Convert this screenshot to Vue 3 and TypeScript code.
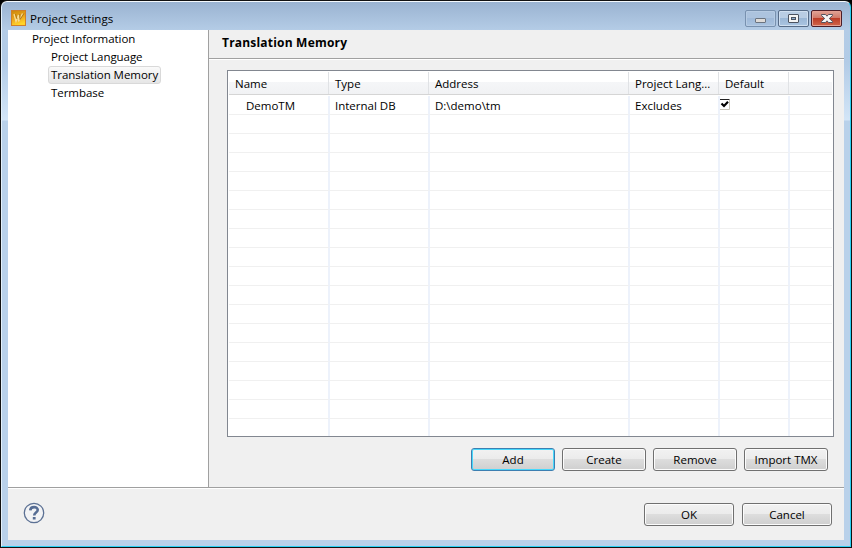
<script setup lang="ts">
interface NavItem { label: string; cls: string; selected?: boolean }
interface Row { name: string; type: string; address: string; lang: string; checked: boolean }

const nav: NavItem[] = [
  { label: 'Project Information', cls: 'root' },
  { label: 'Project Language', cls: 'child' },
  { label: 'Translation Memory', cls: 'child', selected: true },
  { label: 'Termbase', cls: 'child' },
]
const headers: string[] = ['Name', 'Type', 'Address', 'Project Lang...', 'Default', '']
const rows: Row[] = [
  { name: 'DemoTM', type: 'Internal DB', address: 'D:\\demo\\tm', lang: 'Excludes', checked: true },
]
const emptyRows = 17
const actions: string[] = ['Add', 'Create', 'Remove', 'Import TMX']
</script>

<template>
  <div class="window">
    <div class="frame">
      <header class="titlebar">
        <svg class="logo" width="15" height="16" viewBox="0 0 15 16">
          <defs>
            <linearGradient id="gold" x1="0" y1="0" x2="0.3" y2="1">
              <stop offset="0" stop-color="#c9860c" />
              <stop offset="0.6" stop-color="#eda81c" />
              <stop offset="1" stop-color="#ffd42a" />
            </linearGradient>
          </defs>
          <rect x="0.5" y="0.5" width="14" height="15" fill="url(#gold)" stroke="#cf7f2a" />
          <path d="M3 4l2 7.500 2.500-6.500v6.500l4-8" fill="none" stroke="#f7dc96" stroke-width="1.300" />
          <path d="M4.500 4l1.500 5M8.800 4l.2 5.500L13 3.500" fill="none" stroke="#a8741a" stroke-width="0.900" />
        </svg>
        <span class="title">Project Settings</span>
        <div class="controls">
          <span class="ctl min"><svg width="29" height="15" viewBox="0 0 29 15"><rect x="9.500" y="7.500" width="10" height="4" rx="0.500" fill="#dedbd8" stroke="#6b7480" /></svg></span>
          <span class="ctl max"><svg width="29" height="15" viewBox="0 0 29 15"><rect x="9.500" y="3.500" width="10" height="8" rx="0.500" fill="#f4f4f4" stroke="#4c5361" /><rect x="12.500" y="6.500" width="4" height="2" fill="#8daccc" stroke="#4c5361" /></svg></span>
          <span class="ctl close"><svg width="29" height="15" viewBox="0 0 29 15"><path d="M9.500 3.500h4l1.500 1.700 1.500-1.700h4v1L17.300 7.500l3.200 3v1h-4L15 9.800l-1.500 1.700h-4v-1l3.200-3-3.200-3z" fill="#f6f6f6" stroke="#54535e" /></svg></span>
        </div>
      </header>
      <div class="body">
        <div class="upper">
          <nav class="sidebar">
            <div v-for="n in nav" :key="n.label" class="nav" :class="[n.cls, { selected: n.selected }]"><span>{{ n.label }}</span></div>
          </nav>
          <main class="main">
            <h1>Translation Memory</h1>
            <div class="table">
              <div class="tr head"><div v-for="(h, i) in headers" :key="i" class="th">{{ h }}</div></div>
              <div v-for="r in rows" :key="r.name" class="tr">
                <div class="td first">{{ r.name }}</div>
                <div class="td">{{ r.type }}</div>
                <div class="td">{{ r.address }}</div>
                <div class="td">{{ r.lang }}</div>
                <div class="td check">
                  <svg v-if="r.checked" width="11" height="12" viewBox="0 0 11 12"><path d="M0 0.500h9.500" stroke="#222" /><path d="M9.500 1v9.500H0" fill="none" stroke="#c8c4b8" /><path d="M1.500 4.500L4 7 8 2.800" fill="none" stroke="#000" stroke-width="2.200" /></svg>
                </div>
                <div class="td"></div>
              </div>
              <div v-for="k in emptyRows" :key="'e' + k" class="tr"><div v-for="j in 6" :key="j" class="td"></div></div>
            </div>
            <div class="actions">
              <button v-for="(a, i) in actions" :key="a" class="btn" :class="{ focus: i === 0 }">{{ a }}</button>
            </div>
          </main>
        </div>
        <footer class="footer">
          <svg class="help" width="22" height="22" viewBox="0 0 22 22">
            <circle cx="11" cy="11" r="9.700" fill="#f2f3f5" stroke="#5c7194" stroke-width="1.300" />
            <path d="M7.300 8.400C7.400 4 14.700 4.100 14.700 8c0 2.600-3.500 2.600-3.500 5.500" fill="none" stroke="#566d94" stroke-width="2.600" />
            <rect x="9.800" y="15" width="2.800" height="2.500" fill="#566d94" />
          </svg>
          <button class="btn wide">OK</button>
          <button class="btn wide">Cancel</button>
        </footer>
      </div>
    </div>
  </div>
</template>

<style>
body { margin: 0; background: #000; overflow: hidden; }
</style>
<style scoped>
* { box-sizing: border-box; }
.window { width: 852px; height: 548px; padding: 1px; background: #111; border-radius: 7px 7px 0 0; font-family: "Open Sans", "Noto Sans", sans-serif; font-size: 11.5px; color: #000; }
.frame { height: 546px; border: 1px solid; border-color: #f4f9fd #2bd0f4 #2bd0f4 #e4f1fb; border-radius: 6px 6px 0 0; padding: 0 6px 6px; background: linear-gradient(#9ab3d1 0, #b4cce6 28px, #b2cbe6 60px, #d3e5f7 118px, #b9d1ea 119px, #b9d1ea 100%); }
.titlebar { height: 28px; display: flex; align-items: flex-start; }
.logo { margin: 8px 0 0 3px; }
.title { margin: 8px 0 0 4px; line-height: 18px; }
.controls { display: flex; gap: 2px; margin: 8px 2px 0 auto; }
.ctl { width: 31px; height: 17px; border: 1px solid #566b87; border-radius: 2px; box-shadow: inset 0 0 0 1px #d0dff0; background: linear-gradient(#b9cde4 50%, #9bb7d6 50%, #aac5e2); }
.ctl svg { display: block; }
.min { border-color: #7891af; box-shadow: inset 0 0 0 1px #b6cbe3; background: linear-gradient(#acc3de 50%, #9fb9d8 50%, #a9c3e0); }
.close { border-color: #4b1d27; box-shadow: inset 0 0 0 1px #e5a092; background: linear-gradient(#e0a497, #d07564 50%, #bd3d27 50%, #d0664b); }
.body { height: 510px; background: #f0f0f0; display: flex; flex-direction: column; }
.upper { height: 458px; display: flex; border-bottom: 1px solid #a0a0a0; }
.sidebar { width: 201px; background: #fff; border-right: 1px solid #a0a0a0; }
.nav { height: 18px; display: flex; padding-left: 21px; letter-spacing: -0.05px; }
.nav.child { padding-left: 40px; }
.nav span { line-height: 16px; height: 18px; border: 1px solid transparent; border-radius: 3px; padding: 0 2px; white-space: nowrap; }
.nav.selected span { border-color: #d9d9d9; background: linear-gradient(#fafafa, #e6e6e6); }
.main { flex: 1; }
h1 { margin: 0; height: 29px; padding: 4px 0 0 13px; border-bottom: 1px solid #a0a0a0; box-shadow: 0 1px #fff; font-size: 12px; line-height: 18px; font-weight: 700; letter-spacing: 0.2px; }
.table { margin: 11px 0 0 18px; width: 607px; height: 367px; border: 1px solid #828790; background: #fff; padding: 1px; overflow: hidden; }
.tr { display: grid; grid-template-columns: 101px 100px 200px 90px 70px 1fr; height: 19px; }
.tr.head { height: 23px; margin-bottom: 1px; grid-template-columns: 100px 100px 200px 90px 70px 1fr; background: linear-gradient(#fff 45%, #f5f6f8 45%, #f1f2f4); border-bottom: 1px solid #d5d5d5; }
.th { height: 22px; padding-left: 6px; line-height: 24px; border-right: 1px solid #e0e2e5; white-space: nowrap; }
.td { height: 19px; padding: 2px 0 0 5px; line-height: 16px; border-right: 2px solid #edf2fb; border-bottom: 1px solid #f0f0f0; white-space: nowrap; }
.th:last-child, .td:last-child { border-right: 0; }
.td.first { padding-left: 17px; }
.td.check { padding: 3px 0 0; }
.check svg { display: block; }
.actions { display: flex; gap: 7px; margin: 11px 0 0 262px; }
.btn { font: inherit; color: #000; width: 84px; height: 23px; padding: 0; border: 1px solid #707070; border-radius: 3px; box-shadow: inset 0 0 0 1px #fcfcfc; background: linear-gradient(#f2f2f2, #ebebeb 50%, #dddddd 50%, #cfcfcf); }
.btn.focus { border-color: #3c7fb1; box-shadow: inset 0 0 0 1px #48d8fb; }
.footer { height: 52px; border-top: 1px solid #fff; display: flex; padding: 14px 12px 0 15px; gap: 8px; }
.help { margin: -1px auto 0 0; }
.wide { width: 90px; }
</style>
